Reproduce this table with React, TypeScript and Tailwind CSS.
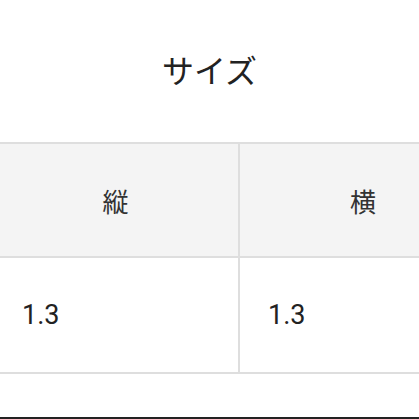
const jp = { fontFamily: '"Noto Sans CJK JP", "Noto Sans", sans-serif' }
const num = { fontFamily: 'Roboto, "Liberation Sans", sans-serif' }

export default function App() {
  return (
    <div className="w-[419px] h-[419px] overflow-hidden bg-white flex flex-col">
      <div className="h-[142px] flex items-center justify-center pb-[4px]">
        <h1 className="text-[32px] text-[#222] leading-none" style={jp}>
          サイズ
        </h1>
      </div>

      <div className="ml-[-7px] w-[493px] border-t-2 border-[#dedede]">
        <div className="grid grid-cols-[247px_246px] bg-[#f4f4f4] border-b-2 border-[#dedede] h-[114px]">
          <div className="border-r-2 border-[#dedede] flex items-center justify-center text-[26px] text-[#333]" style={jp}>
            縦
          </div>
          <div className="flex items-center justify-center text-[26px] text-[#333]" style={jp}>
            横
          </div>
        </div>
        <div className="grid grid-cols-[247px_246px] border-b-2 border-[#dedede] h-[116px]">
          <div className="border-r-2 border-[#dedede] flex items-center pl-[29px] text-[27px] text-[#222]" style={num}>
            1.3
          </div>
          <div className="flex items-center pl-[28px] text-[27px] text-[#222]" style={num}>
            1.3
          </div>
        </div>
      </div>

      <div className="mt-auto h-[2px] bg-[#222]" />
    </div>
  )
}
